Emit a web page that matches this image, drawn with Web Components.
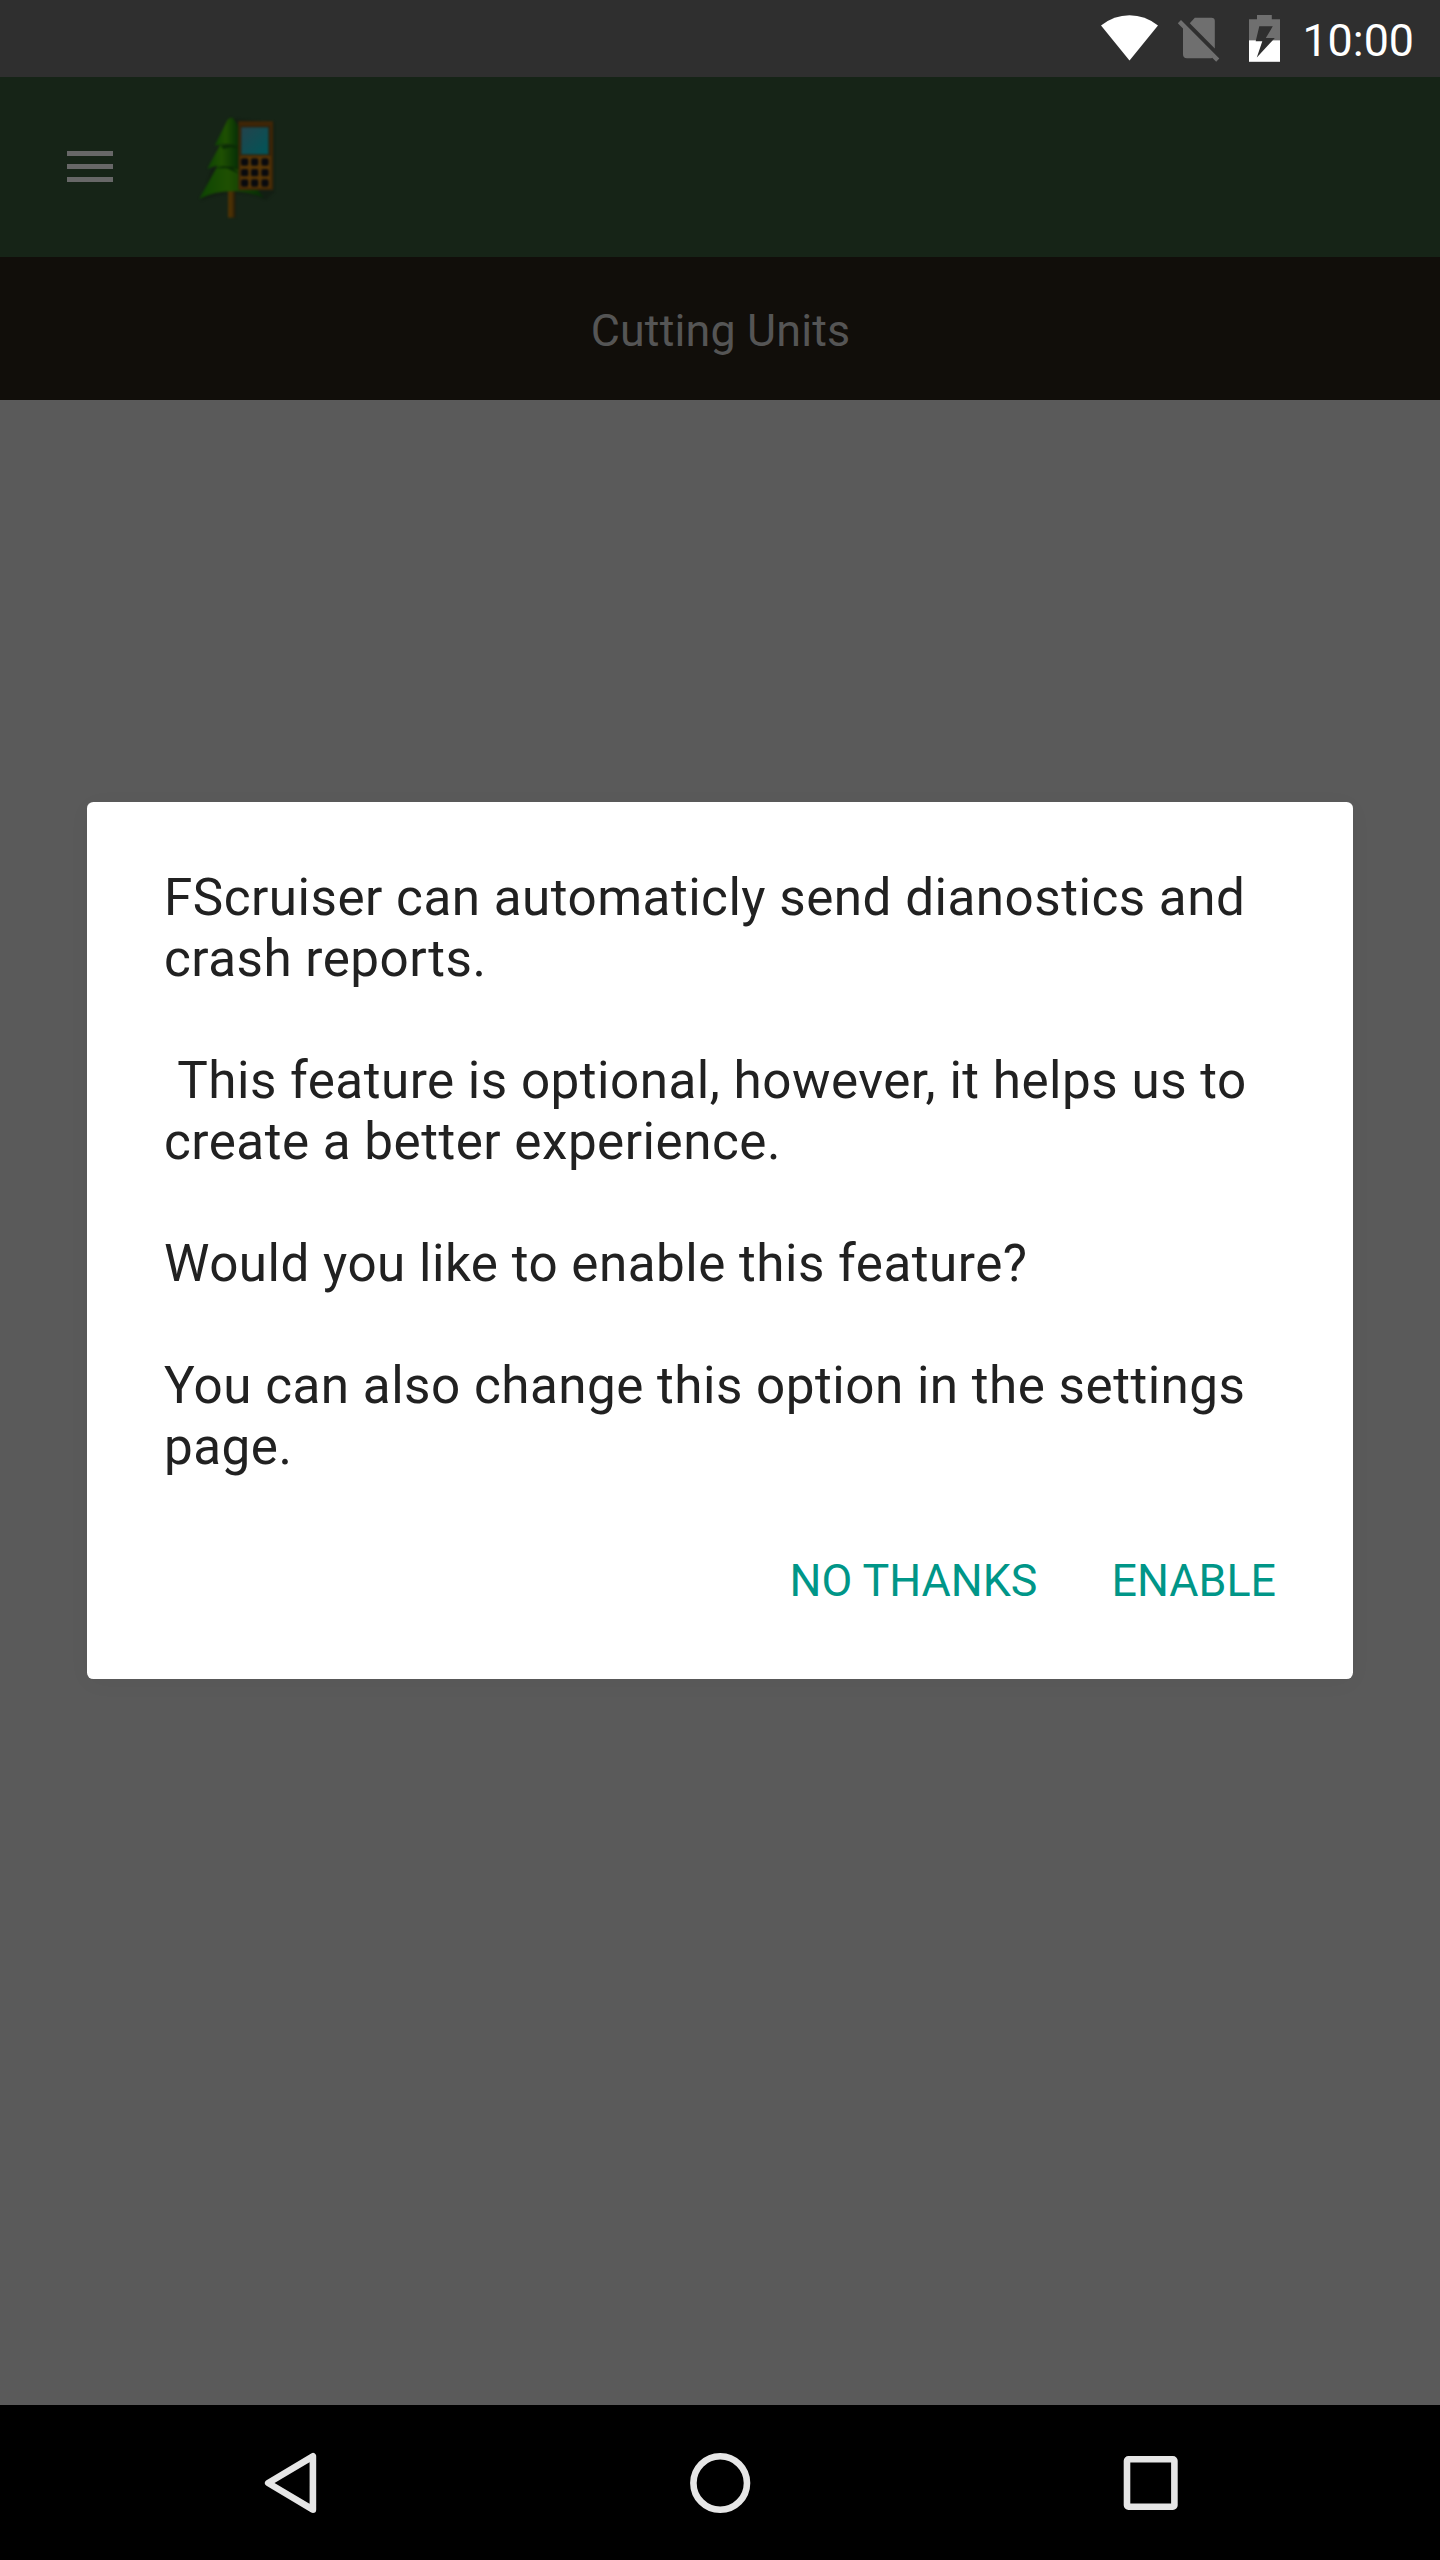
<!DOCTYPE html>
<html lang="en">
<head>
<meta charset="utf-8">
<title>FScruiser</title>
<style>
html,body{margin:0;height:100%}
body{font-family:Roboto,"Noto Sans",sans-serif;background:#000}
</style>
</head>
<body>
<device-screen>
  <status-bar slot="status" time="10:00"></status-bar>
  <app-bar slot="bar"></app-bar>
  <page-heading slot="heading">Cutting Units</page-heading>
  <alert-dialog>
    <p>FScruiser can automaticly send dianostics and crash reports.</p>
    <p>&nbsp;This feature is optional, however, it helps us to create a better experience.</p>
    <p>Would you like to enable this feature?</p>
    <p>You can also change this option in the settings page.</p>
    <dialog-button slot="actions">NO THANKS</dialog-button>
    <dialog-button slot="actions">ENABLE</dialog-button>
  </alert-dialog>
  <nav-bar slot="nav"></nav-bar>
</device-screen>
<script>
const define=(name,html,setup)=>customElements.define(name,class extends HTMLElement{
  constructor(){super();this.attachShadow({mode:'open'}).innerHTML=html;}
  connectedCallback(){if(setup)setup(this,this.shadowRoot);}
});

define('device-screen',`<style>
:host{display:flex;flex-direction:column;width:1440px;height:2560px;overflow:hidden;background:#5a5a5a}
main{flex:1;display:flex;flex-direction:column;align-items:center;padding-top:402px;box-sizing:border-box}
</style><slot name="status"></slot><slot name="bar"></slot><slot name="heading"></slot><main><slot></slot></main><slot name="nav"></slot>`);

define('status-bar',`<style>
:host{display:flex;justify-content:flex-end;height:77px;background:#2f2f2f;color:#fff;flex:none}
svg{width:200px;height:77px;margin-right:2.45px}
time{font-size:44.8px;line-height:77px;padding:2px 26px 0 0;height:75px}
</style>
<svg viewBox="1100 0 200 77">
<path fill="#fff" d="M1129.5 60.5 1101 25.5Q1114 15.3 1129.5 15.3T1158 25.5Z"/>
<g fill="#6f6f6f"><path d="M1189.8 23.2 1194.8 17.8H1211.5Q1214.8 17.8 1214.8 21V48.4Z"/>
<path d="M1177.8 23.2 1181 20 1219.3 58.6 1216.2 61.8 1212.2 57.7Q1211.4 58.2 1210.5 58.2H1187Q1183 58.2 1183 54.3V28.5Z"/>
<path d="M1249 40.5V19.3H1257V15H1271.8V19.3H1280V40.5Z"/></g>
<path fill="#fff" d="M1249 40.3H1280V61.8H1249Z"/>
<path fill="#2f2f2f" d="M1259.3 26.3H1272.8L1265.8 38H1274.8L1256.8 57.5 1262.3 41.3H1255.7Z"/>
</svg><time></time>`,(h,r)=>r.querySelector('time').textContent=h.getAttribute('time'));

define('app-bar',`<style>
:host{display:flex;align-items:center;height:180px;background:#162417;flex:none;padding-left:67px;gap:84px}
.menu{width:46px;height:31px;margin-bottom:1px}.logo{width:80px;height:110px}
</style>
<svg class="menu" viewBox="0 0 46 31" fill="#676767"><path d="M0 0h46v5H0zM0 13h46v5H0zM0 26h46v5H0z"/></svg>
<svg class="logo" viewBox="51 21 240 330">
<defs>
<linearGradient id="leaf" x1="0" x2="1"><stop stop-color="#0d4503"/><stop offset=".45" stop-color="#1f5002"/><stop offset="1" stop-color="#042c06"/></linearGradient>
<linearGradient id="lcd" x1="0" y1="0" x2="1" y2="1"><stop stop-color="#23434c"/><stop offset="1" stop-color="#005558"/></linearGradient>
<linearGradient id="wood" x1="0" x2="1"><stop stop-color="#4e3204"/><stop offset=".5" stop-color="#4a2f04"/><stop offset="1" stop-color="#1c180c"/></linearGradient>
<filter id="soft" x="-10%" y="-10%" width="120%" height="120%" color-interpolation-filters="sRGB"><feGaussianBlur stdDeviation="2.8"/></filter>
</defs>
<g filter="url(#soft)">
<path fill="#101a10" d="M160 40 112 130 92 197 64 287Q160 245 258 285L284 260V52Z" opacity=".55"/>
<path fill="url(#wood)" d="M144 255H167V338H144Z"/>
<path fill="url(#leaf)" d="M114 180 58 281Q150 238 251 278L222 240 178 180Z"/>
<path fill="#0a2c05" d="M106 190 128 184 178 184V194L160 190 178 207 140 190Z"/>
<path fill="url(#leaf)" d="M120 120 82 191Q132 172 178 189V120Z"/>
<path fill="#0a2c05" d="M122 122 178 118V132L152 127 130 132Z"/>
<path fill="url(#leaf)" d="M153 38Q146 38 142 46L104 122Q142 113 178 123V70L161 41Q158 38 153 38Z"/>
<path fill="#402607" d="M175 49H279V255H175Z"/>
<path fill="#573606" d="M181 152H271V248H181Z"/>
<path fill="#2e200c" d="M181 62H271V152H181Z"/>
<path fill="url(#lcd)" d="M184 67H265V148H184Z"/>
<g fill="#090a0e"><rect x="183" y="160" width="22" height="22" rx="5"/><rect x="213" y="160" width="22" height="22" rx="5"/><rect x="244" y="160" width="22" height="22" rx="5"/><rect x="183" y="192" width="22" height="22" rx="5"/><rect x="213" y="192" width="22" height="22" rx="5"/><rect x="244" y="192" width="22" height="22" rx="5"/><rect x="183" y="223" width="22" height="22" rx="5"/><rect x="213" y="223" width="22" height="22" rx="5"/><rect x="244" y="223" width="22" height="22" rx="5"/></g>
</g></svg>`);

define('page-heading',`<style>
:host{display:block;height:143px;box-sizing:border-box;padding:2px 0 0 1px;line-height:143px;text-align:center;background:#110e0a;color:#555;font-size:44.8px;letter-spacing:.16px;flex:none}
</style><slot></slot>`);

define('alert-dialog',`<style>
:host{display:flex;flex-direction:column;justify-content:space-between;box-sizing:border-box;width:1266px;height:877px;border-radius:6.4px;background:#fff;padding:65px 77px 0;color:#212121;box-shadow:0 4px 24px rgba(0,0,0,.03)}
.message{display:flex;flex-direction:column;gap:61px;font-size:51.2px;line-height:61px;letter-spacing:.5px}
::slotted(p){margin:0}
.actions{display:flex;justify-content:flex-end;gap:74px;height:124px}
</style><div class="message"><slot></slot></div><div class="actions"><slot name="actions"></slot></div>`);

define('dialog-button',`<style>
:host{display:block;font-size:44.8px;line-height:52px;color:#009688;white-space:nowrap}
</style><slot></slot>`);

define('nav-bar',`<style>
:host{display:flex;justify-content:space-between;align-items:center;height:155px;background:#000;flex:none;padding:0 257px;box-sizing:border-box}
svg{width:66px;height:66px;fill:none;stroke:#e6e6e6;stroke-width:6.6;stroke-linejoin:round}
</style>
<svg viewBox="257 2449.5 66 66"><path d="M312.9 2455.8V2509.2L268.2 2482.5Z"/></svg>
<svg viewBox="687 2449.5 66 66"><circle cx="720.2" cy="2482.5" r="26.8"/></svg>
<svg viewBox="1117 2449.5 66 66"><rect x="1127" y="2458.8" width="47.4" height="47.4" rx="1.5"/></svg>`);
</script>
</body>
</html>
